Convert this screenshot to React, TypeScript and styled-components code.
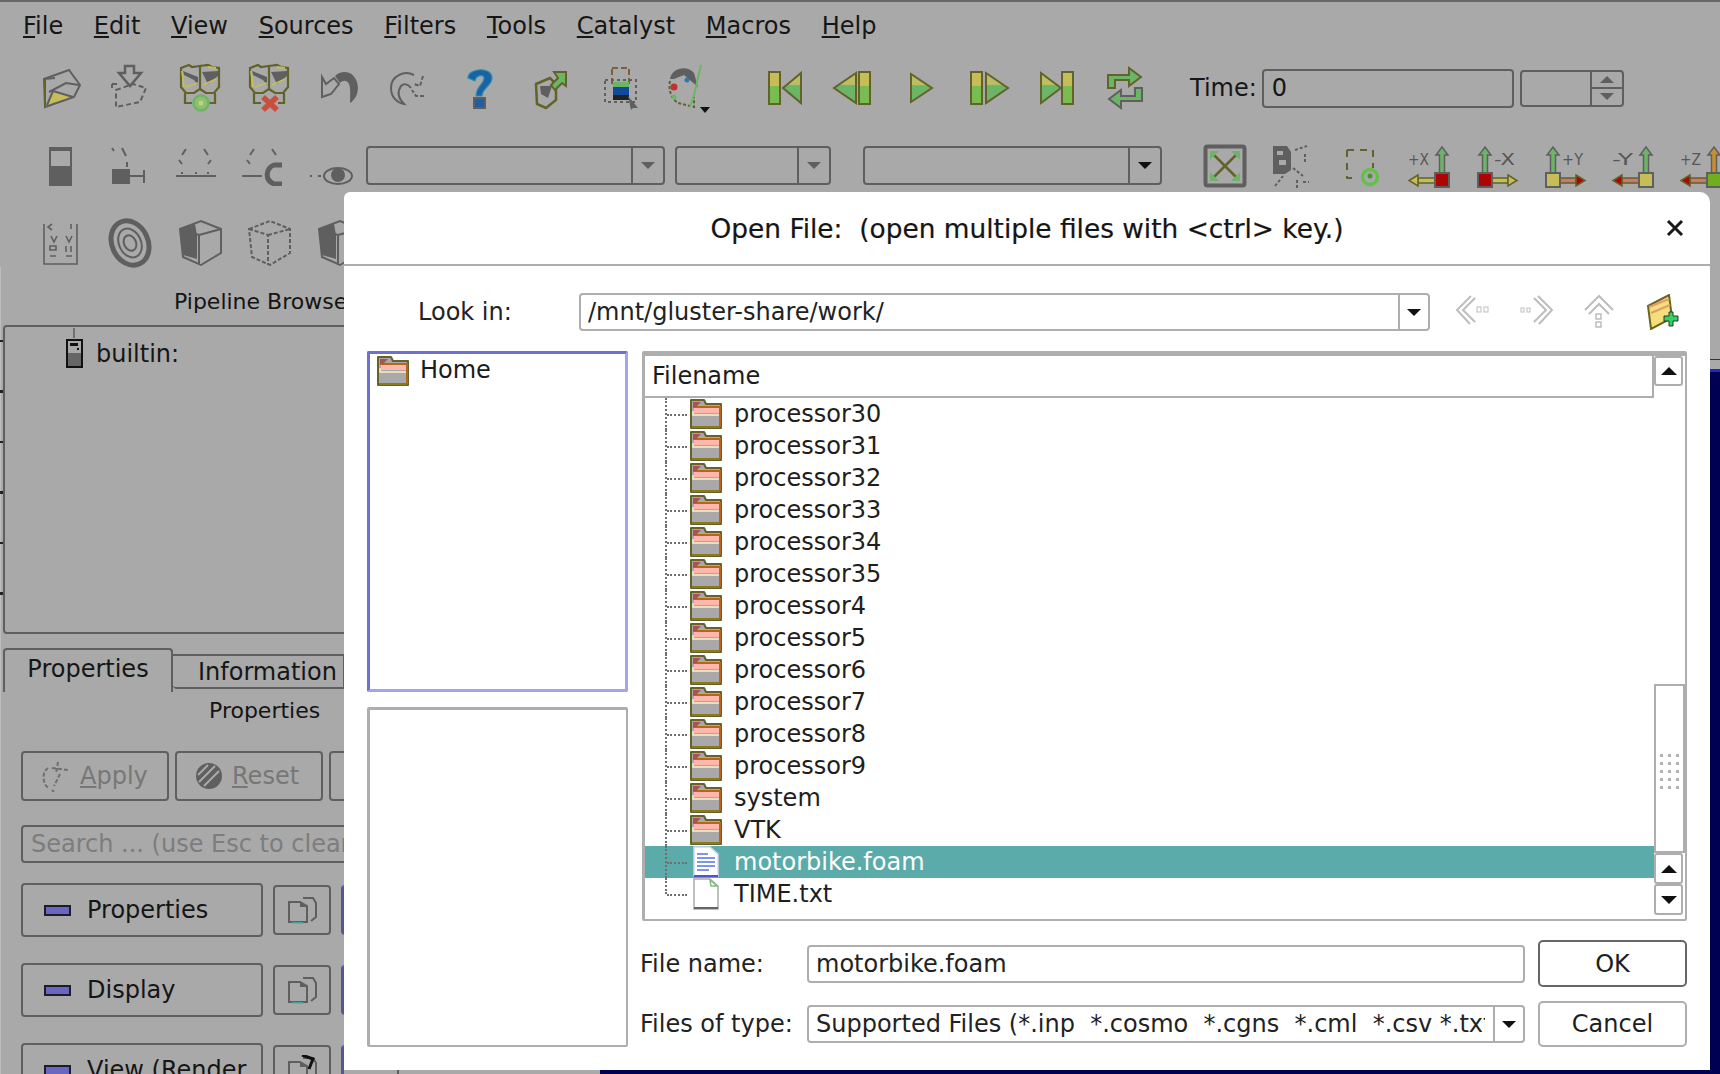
import React from "react";
import styled, { createGlobalStyle } from "styled-components";

const DARK = "#5f5f5f";
const OLIVE = "#62622a";
const YELLOW = "#c6bd58";
const GREEN = "#6cb567";
const RED = "#ad0404";
const LINE = "#aeaeae";

const GlobalStyle = createGlobalStyle`
  html, body { margin: 0; padding: 0; background: #a9a9a9; }
  * { box-sizing: border-box; }
`;

const Root = styled.div`
  position: relative;
  width: 1720px;
  height: 1074px;
  overflow: hidden;
  background: #a9a9a9;
  color: #111;
  font-family: "DejaVu Sans", sans-serif;
  font-size: 24px;
  display: flex;
  flex-direction: column;
  border-top: 2px solid #686868;
`;

const MenuBar = styled.div`
  height: 48px;
  flex: none;
  display: flex;
  align-items: center;
  gap: 30.7px;
  padding-left: 23px;
`;

const MenuItem = styled.span`
  color: #161616;
  white-space: pre;
`;

const ToolRow = styled.div<{ $h: number; $top: number }>`
  flex: none;
  height: ${(p) => p.$h}px;
  margin-top: ${(p) => p.$top}px;
  padding-left: 26px;
  display: flex;
  align-items: center;
`;

const Slot = styled.div<{ $w: number }>`
  width: ${(p) => p.$w}px;
  flex: none;
  display: flex;
  justify-content: center;
  align-items: center;
`;

const Group = styled.div<{ $left: number }>`
  display: flex;
  align-items: center;
  margin-left: ${(p) => p.$left}px;
`;

const TimeLabel = styled.span`
  margin-left: 31px;
  margin-right: 5px;
  color: #161616;
`;

const GreyField = styled.div<{ $w: number; $h?: number }>`
  width: ${(p) => p.$w}px;
  height: ${(p) => p.$h ?? 39}px;
  flex: none;
  border: 2px solid ${DARK};
  border-radius: 4px;
  display: flex;
  align-items: center;
  padding-left: 8px;
  color: #161616;
`;

const Spin = styled.div`
  width: 104px;
  height: 37px;
  margin-left: 6px;
  flex: none;
  border: 2px solid ${DARK};
  border-radius: 4px;
  display: flex;
  justify-content: flex-end;
`;

const SpinButtons = styled.div`
  width: 32px;
  border-left: 2px solid ${DARK};
  display: flex;
  flex-direction: column;
`;

const SpinCell = styled.div<{ $sep?: boolean }>`
  flex: 1;
  display: flex;
  align-items: center;
  justify-content: center;
  border-top: ${(p) => (p.$sep ? `2px solid ${DARK}` : "none")};
`;

const Caret = styled.span<{ $up?: boolean; $c?: string; $s?: number }>`
  width: 0;
  height: 0;
  display: block;
  border-left: ${(p) => p.$s ?? 7}px solid transparent;
  border-right: ${(p) => p.$s ?? 7}px solid transparent;
  ${(p) => (p.$up ? "border-bottom" : "border-top")}: ${(p) => p.$s ?? 7}px solid ${(p) => p.$c ?? "#111"};
`;

const DropCombo = styled.div<{ $w: number; $left: number }>`
  width: ${(p) => p.$w}px;
  height: 39px;
  margin-left: ${(p) => p.$left}px;
  flex: none;
  border: 2px solid ${DARK};
  border-radius: 4px;
  display: flex;
  justify-content: flex-end;
`;

const DropCell = styled.div`
  width: 32px;
  border-left: 2px solid ${DARK};
  display: flex;
  align-items: center;
  justify-content: center;
`;

/* work area below the toolbars */
const Work = styled.div`
  flex: 1;
  min-height: 0;
  display: flex;
`;

const Dock = styled.div`
  width: 600px;
  flex: none;
  overflow: hidden;
  display: flex;
  flex-direction: column;
  padding-left: 2px;
  border-left: 1px solid #bdbdbd;
`;

const DockTitle = styled.div<{ $h: number; $pad: number }>`
  height: ${(p) => p.$h}px;
  flex: none;
  display: flex;
  align-items: center;
  padding-left: ${(p) => p.$pad}px;
  font-size: 22px;
  color: #141414;
  white-space: nowrap;
`;

const PipelineTitle = styled(DockTitle)`
  padding-top: 11px;
`;

const PipelinePanel = styled.div`
  width: 520px;
  height: 309px;
  flex: none;
  border: 2px solid ${DARK};
  border-radius: 4px;
  padding: 1px 0 0 60px;
  display: flex;
  gap: 11px;
  align-items: flex-start;
`;

const Builtin = styled.span`
  margin-top: 12px;
  color: #161616;
`;

const TabRow = styled.div`
  height: 42px;
  margin-top: 14px;
  flex: none;
  display: flex;
  align-items: flex-end;
`;

const ActiveTab = styled.div`
  width: 170px;
  height: 44px;
  margin-bottom: -2px;
  border: 2px solid ${DARK};
  border-bottom: none;
  border-radius: 4px 4px 0 0;
  display: flex;
  justify-content: center;
  padding-top: 5px;
  color: #161616;
`;

const IdleTab = styled.div`
  width: 172px;
  height: 35px;
  margin-bottom: 1px;
  border: 2px solid ${DARK};
  border-left: none;
  border-radius: 0 0 0 4px;
  display: flex;
  align-items: center;
  padding-left: 25px;
  color: #161616;
`;

const ActionRow = styled.div<{ $top: number; $h: number }>`
  margin-top: ${(p) => p.$top}px;
  height: ${(p) => p.$h}px;
  flex: none;
  display: flex;
  gap: 6px;
  padding-left: 18px;
  align-items: center;
`;

const GreyButton = styled.div<{ $w: number; $h: number; $dim?: boolean }>`
  width: ${(p) => p.$w}px;
  height: ${(p) => p.$h}px;
  flex: none;
  border: 2px solid ${DARK};
  border-radius: 4px;
  display: flex;
  align-items: center;
  gap: 8px;
  padding-left: 17px;
  color: ${(p) => (p.$dim ? "#777" : "#151515")};
  white-space: pre;
`;

const SearchBox = styled.div`
  width: 520px;
  height: 38px;
  margin: 24px 0 0 18px;
  flex: none;
  border: 2px solid ${DARK};
  border-radius: 4px;
  display: flex;
  align-items: center;
  padding-left: 8px;
  color: #7d7d7d;
  white-space: pre;
  overflow: hidden;
`;

const SectionRow = styled.div<{ $top: number }>`
  margin-top: ${(p) => p.$top}px;
  height: 54px;
  flex: none;
  display: flex;
  padding-left: 18px;
  align-items: center;
`;

const SectionButton = styled.div`
  width: 242px;
  height: 54px;
  flex: none;
  border: 2px solid ${DARK};
  border-radius: 4px;
  display: flex;
  align-items: center;
  padding-left: 21px;
  gap: 16px;
  color: #151515;
  white-space: pre;
`;

const Dash = styled.span`
  width: 27px;
  height: 11px;
  flex: none;
  background: #6868c2;
  border: 2px solid #1d1d2a;
`;

const CopyButton = styled.div`
  width: 58px;
  height: 50px;
  margin-left: 10px;
  flex: none;
  border: 2px solid ${DARK};
  border-radius: 4px;
  display: flex;
  align-items: center;
  justify-content: center;
`;

const NextButton = styled.div`
  width: 58px;
  height: 50px;
  margin-left: 10px;
  flex: none;
  border: 2px solid ${DARK};
  border-left: 3px solid #55559a;
  border-radius: 4px;
`;

const Chip = styled.div<{ $w: number; $left: number }>`
  width: ${(p) => p.$w}px;
  height: 20px;
  margin-left: ${(p) => p.$left}px;
  align-self: flex-end;
  margin-bottom: -13px;
  flex: none;
  border: 2px solid ${DARK};
  border-radius: 3px;
`;

const ViewColumn = styled.div`
  flex: 1;
  min-width: 0;
  display: flex;
  flex-direction: column;
`;

const ViewTop = styled.div`
  height: 93px;
  flex: none;
  border-bottom: 1px solid #333;
`;

const ViewGap = styled.div`
  height: 12px;
  flex: none;
  border-bottom: 3px solid #2626c4;
`;

const ViewCanvas = styled.div`
  flex: 1;
  background: #000052;
`;

const EdgeTicks = styled.div`
  position: absolute;
  left: 0;
  top: 338px;
  width: 3px;
  height: 262px;
  background: repeating-linear-gradient(#222 0 2px, transparent 2px 50.5px);
`;

/* the modal open-file window */
const Dialog = styled.div`
  position: absolute;
  left: 344px;
  top: 190px;
  width: 1366px;
  height: 878px;
  background: #fff;
  border-radius: 6px 10px 0 0;
  display: flex;
  flex-direction: column;
  color: #1b1b1b;
`;

const DialogHead = styled.div`
  height: 74px;
  flex: none;
  border-bottom: 2px solid ${LINE};
  display: grid;
  grid-template-columns: 1fr auto 1fr;
  align-items: center;
`;

const Title = styled.div`
  grid-column: 2;
  white-space: pre;
  font-size: 26.4px;
  color: #151515;
  -webkit-text-stroke: 0.2px #151515;
`;

const CloseSlot = styled.div`
  justify-self: end;
  margin-right: 26px;
  display: flex;
`;

const LookRow = styled.div`
  height: 38px;
  margin-top: 27px;
  flex: none;
  display: flex;
  align-items: center;
`;

const LookLabel = styled.span`
  width: 235px;
  padding-left: 74px;
  flex: none;
  color: #222;
`;

const Field = styled.div<{ $w?: number }>`
  ${(p) => (p.$w ? `width: ${p.$w}px;` : "")}
  height: 38px;
  flex: none;
  border: 2px solid ${LINE};
  border-radius: 4px;
  display: flex;
  align-items: center;
  padding-left: 7px;
  color: #222;
  white-space: pre;
  overflow: hidden;
`;

const FieldText = styled.span`
  flex: 1;
  min-width: 0;
  overflow: hidden;
`;

const FieldDrop = styled.div`
  width: 30px;
  height: 100%;
  flex: none;
  margin-left: 8px;
  border-left: 2px solid ${LINE};
  display: flex;
  align-items: center;
  justify-content: center;
`;

const NavGroup = styled.div`
  display: flex;
  margin-left: 11px;
`;

const NavSlot = styled.div`
  width: 63px;
  display: flex;
  justify-content: center;
`;

const MainArea = styled.div`
  height: 696px;
  margin-top: 20px;
  padding: 0 23px;
  flex: none;
  display: flex;
  gap: 14px;
`;

const SideColumn = styled.div`
  width: 261px;
  flex: none;
  display: flex;
  flex-direction: column;
  gap: 15px;
`;

const Places = styled.div`
  height: 341px;
  flex: none;
  border: 3px solid #a3a6e6;
  border-top-color: #6d70cc;
  border-left-color: #6d70cc;
  border-radius: 2px;
  padding: 2px 0 0 7px;
  display: flex;
  gap: 12px;
`;

const PlaceName = styled.span`
  margin-left: -1px;
`;

const PlacesEmpty = styled.div`
  flex: 1;
  border: 2px solid ${LINE};
  border-left-width: 3px;
  border-top-width: 3px;
  border-radius: 2px;
`;

const RightColumn = styled.div`
  flex: 1;
  min-width: 0;
  display: flex;
  flex-direction: column;
`;

const Tree = styled.div`
  height: 570px;
  flex: none;
  border: 2px solid ${LINE};
  border-top-width: 5px;
  border-left-width: 3px;
  border-radius: 2px;
  display: flex;
  overflow: hidden;
`;

const TreeMain = styled.div`
  flex: 1;
  min-width: 0;
  display: flex;
  flex-direction: column;
`;

const TreeHeader = styled.div`
  height: 42px;
  flex: none;
  border-bottom: 2px solid ${LINE};
  border-right: 2px solid ${LINE};
  display: flex;
  align-items: center;
  padding-left: 7px;
  color: #1b1b1b;
`;

const Row = styled.div<{ $selected?: boolean }>`
  height: 32px;
  flex: none;
  padding-left: 20px;
  display: flex;
  align-items: center;
  background: ${(p) => (p.$selected ? "#5aabaa" : "transparent")};
  color: ${(p) => (p.$selected ? "#fff" : "#1e1e1e")};
`;

const Guide = styled.span<{ $last?: boolean }>`
  position: relative;
  width: 25px;
  height: ${(p) => (p.$last ? "50%" : "100%")};
  align-self: flex-start;
  flex: none;
  border-left: 2px dotted #6f6f6f;

  &::after {
    content: "";
    position: absolute;
    left: 0;
    top: ${(p) => (p.$last ? "100%" : "50%")};
    width: 20px;
    border-top: 2px dotted #6f6f6f;
  }
`;

const RowIcon = styled.span`
  width: 32px;
  height: 32px;
  flex: none;
  display: flex;
  align-items: center;
  justify-content: center;
`;

const RowText = styled.span`
  margin-left: 12px;
  margin-top: -1px;
`;

const ScrollCol = styled.div`
  width: 31px;
  flex: none;
  display: flex;
  flex-direction: column;
`;

const ScrollButton = styled.div<{ $h: number }>`
  height: ${(p) => p.$h}px;
  width: 29px;
  flex: none;
  border: 2px solid ${LINE};
  border-radius: 3px;
  display: flex;
  align-items: center;
  justify-content: center;
`;

const ScrollTrack = styled.div`
  flex: none;
  height: 298px;
`;

const ScrollHandle = styled.div`
  height: 169px;
  flex: none;
  border: 2px solid ${LINE};
  display: flex;
  align-items: center;
  justify-content: center;
  padding-top: 4px;
`;

const FileForm = styled.div`
  margin-top: 19px;
  display: grid;
  grid-template-columns: 165px 718px 149px;
  row-gap: 14px;
  grid-template-rows: 47px 46px;
  align-items: center;
`;

const FormLabel = styled.span`
  margin-left: -2px;
  color: #222;
`;

const DialogButton = styled.div<{ $primary?: boolean }>`
  width: 149px;
  margin-left: 13px;
  height: 100%;
  border: 2px solid ${(p) => (p.$primary ? "#666" : LINE)};
  border-radius: 5px;
  display: flex;
  align-items: center;
  justify-content: center;
  color: #1e1e1e;
`;

/* drawn icons --------------------------------------------------------- */

const OpenIcon = () => (
  <svg width="44" height="48" viewBox="0 0 44 48">
    <path d="M7 42 L14 28 L34 33 Z" fill={YELLOW} />
    <path d="M5 15 L30 6 L41 21 L35 33 L6 43 Z" fill="none" stroke={DARK} strokeWidth="2" />
    <path d="M5 15 L16 14 M10 28 L27 19 L40 21 M8 41 L14 27 L34 33" fill="none" stroke={DARK} strokeWidth="2" />
    <path d="M6 16 L6 42" stroke={OLIVE} strokeWidth="2" />
  </svg>
);

const SaveIcon = () => (
  <svg width="44" height="48" viewBox="0 0 44 48">
    <path d="M4 20 H12 M4 20 V24 M8 26 L25 20 L38 24 L32 38 L8 43 Z" fill="none" stroke={DARK} strokeWidth="2" strokeDasharray="5 3" />
    <path d="M17 2 H26 V9 H33 L22 22 L11 9 H17 Z" fill="none" stroke={DARK} strokeWidth="2.5" />
  </svg>
);

const ServerIcon = ({ bad }: { bad?: boolean }) => (
  <svg width="44" height="50" viewBox="0 0 44 50">
    <path d="M3 5 L11 2 L14 4 L22 3 V26 L16 30 H8 L3 24 Z M22 3 L30 2 L34 4 L41 5 V24 L36 30 H28 L22 26" fill="none" stroke={OLIVE} strokeWidth="2.2" />
    <path d="M5 8 L20 14 V22 L16 17 L6 12 Z M24 9 L40 8 V13 L30 21 Z" fill={DARK} />
    <path d="M4 8 L6 24 M8 24 L20 20 M30 4 L38 5 M25 22 L38 16" stroke={YELLOW} strokeWidth="1.8" />
    <path d="M7 30 V40 H14 M37 30 V40 H31" fill="none" stroke={OLIVE} strokeWidth="2.2" />
    {bad ? (
      <path d="M16 34 L30 47 M30 34 L16 47" stroke="#c9503e" strokeWidth="5.5" />
    ) : (
      <>
        <circle cx="23" cy="40" r="7.5" fill="#8cc06e" stroke={GREEN} strokeWidth="2.5" />
        <circle cx="23" cy="40" r="2.5" fill="#c4cf7e" />
      </>
    )}
  </svg>
);

const UndoIcon = () => (
  <svg width="44" height="48" viewBox="0 0 44 48">
    <path d="M5 13 L9 20 L17 14 L22 20 L14 30 L5 33 Z" fill="none" stroke={DARK} strokeWidth="2" />
    <path d="M18 12 C24 6 36 6 40 18 C43 28 38 36 33 39 C33 33 34 26 32 20 C30 16 26 16 23 19 Z" fill={DARK} />
  </svg>
);

const RedoIcon = () => (
  <svg width="44" height="48" viewBox="0 0 44 48">
    <path d="M28 11 C18 6 5 12 5 24 C5 34 12 39 18 40 C12 34 11 28 15 22 C18 19 22 20 25 24" fill="none" stroke={DARK} strokeWidth="2" />
    <path d="M37 12 L34 22 L28 20 M38 32 L30 32 L26 26" fill="none" stroke={DARK} strokeWidth="2" strokeDasharray="4 2" />
  </svg>
);

const HelpIcon = () => (
  <svg width="44" height="48" viewBox="-2 0 44 48">
    <path d="M10 14 C10 4 34 2 34 14 C34 22 24 24 24 32 H18 C18 22 26 20 26 14 C26 10 18 11 17 17 Z" fill="#1a62a8" stroke="#2f8fa8" strokeWidth="1.2" />
    <rect x="16" y="34" width="11" height="10" fill="#1f5da5" stroke={DARK} strokeWidth="2" />
  </svg>
);

const ExportIcon = () => (
  <svg width="44" height="48" viewBox="-3 0 44 48">
    <path d="M8 20 L22 14 L28 20 V36 L18 44 L9 40 Z" fill="none" stroke={OLIVE} strokeWidth="2.5" />
    <path d="M12 22 L24 22 L20 34 L13 30 Z" fill={DARK} />
    <path d="M26 8 L38 8 L38 22 L34 19 L27 26 L23 21 L30 14 Z" fill={GREEN} stroke={OLIVE} strokeWidth="2" />
  </svg>
);

const SelectIcon = () => (
  <svg width="44" height="48" viewBox="-4 0 44 48">
    <rect x="13" y="4" width="17" height="18" fill="none" stroke="#7b5f3e" strokeWidth="2" strokeDasharray="6 3" />
    <rect x="6" y="16" width="31" height="22" fill="none" stroke={DARK} strokeWidth="2" strokeDasharray="3 3" />
    <rect x="14" y="18" width="16" height="5" fill={GREEN} />
    <rect x="14" y="23" width="16" height="8" fill="#104a9a" />
    <rect x="14" y="31" width="16" height="5" fill="#222" />
    <path d="M29 32 L39 44 L34 44 L32 46 Z" fill={DARK} />
  </svg>
);

const HeadIcon = () => (
  <svg width="48" height="50" viewBox="-2 0 48 50">
    <path d="M6 16 C8 4 24 2 30 10 L34 24 L20 12 L10 16 Z" fill={DARK} />
    <path d="M6 18 C4 28 8 36 14 40 L30 44 V34" fill="none" stroke={OLIVE} strokeWidth="2" strokeDasharray="3 2" />
    <path d="M37 2 L30 32 L26 44" fill="none" stroke={GREEN} strokeWidth="2" />
    <circle cx="23" cy="17" r="2.5" fill="#2a78b8" />
    <circle cx="10" cy="24" r="3.5" fill="#c23030" />
    <circle cx="10" cy="34" r="2.5" fill={GREEN} />
    <path d="M36 44 H46 L41 50 Z" fill="#111" />
  </svg>
);

type StepKind = "first" | "prev" | "play" | "next" | "last";

const StepIcon = ({ kind }: { kind: StepKind }) => {
  const tri = { fill: `url(#step-${kind})`, stroke: OLIVE, strokeWidth: 2 };
  const Bar = ({ x }: { x: number }) => (
    <>
      <rect x={x} y="6" width="11" height="32" fill="#78bc52" stroke={OLIVE} strokeWidth="2" />
      <rect x={x + 1} y="7" width="9" height="13" fill={YELLOW} />
    </>
  );
  return (
    <svg width="44" height="44" viewBox="0 0 44 44">
      <defs>
        <linearGradient id={`step-${kind}`} x1="0" y1="0" x2="0" y2="1">
          <stop offset="0.38" stopColor="#bdbd62" />
          <stop offset="0.42" stopColor={GREEN} />
        </linearGradient>
      </defs>
      {kind === "first" && (
        <>
          <Bar x={6} />
          <path d="M38 7 L20 22 L38 37 Z" {...tri} />
        </>
      )}
      {kind === "prev" && (
        <>
          <path d="M25 7 L3 22 L25 37 Z" {...tri} />
          <Bar x={28} />
        </>
      )}
      {kind === "play" && <path d="M12 8 L33 22 L12 36 Z" {...tri} />}
      {kind === "next" && (
        <>
          <Bar x={4} />
          <path d="M19 7 L41 22 L19 37 Z" {...tri} />
        </>
      )}
      {kind === "last" && (
        <>
          <path d="M6 7 L26 22 L6 37 Z" {...tri} />
          <Bar x={27} />
        </>
      )}
    </svg>
  );
};

const LoopIcon = () => (
  <svg width="44" height="48" viewBox="0 0 44 48">
    <path d="M5 24 V11 H26 V4 L38 13 L26 22 V16 H12 V24 Z" fill={GREEN} stroke={OLIVE} strokeWidth="2" />
    <path d="M39 24 V37 H18 V44 L6 35 L18 26 V32 H32 V24 Z" fill={GREEN} stroke={DARK} strokeWidth="2" />
  </svg>
);

const BlockIcon = () => (
  <svg width="26" height="40" viewBox="0 0 26 40">
    <rect x="2" y="1" width="23" height="39" fill={DARK} />
    <rect x="4" y="5" width="19" height="15" fill="#a9a9a9" />
  </svg>
);

const CupIcon = () => (
  <svg width="44" height="40" viewBox="0 0 44 40">
    <path d="M6 2 L8 5 M16 2 L20 10 M21 16 V21" stroke={DARK} strokeWidth="2" />
    <path d="M6 23 H24 V38 H6 Z" fill={DARK} />
    <path d="M24 30 H38 M38 24 V37" stroke={DARK} strokeWidth="2" />
  </svg>
);

const FlatIcon = () => (
  <svg width="44" height="40" viewBox="0 0 44 40">
    <path d="M12 3 L8 9 M5 14 L8 18 M30 3 L34 9 M37 14 L34 18 M2 30 H42 M8 28 V26 M22 28 V26 M34 28 V26" fill="none" stroke={DARK} strokeWidth="2" />
  </svg>
);

const CurveIcon = () => (
  <svg width="44" height="40" viewBox="0 0 44 40">
    <path d="M12 3 L8 9 M5 14 L8 18 M30 3 L34 9 M0 30 H20" fill="none" stroke={DARK} strokeWidth="2" />
    <path d="M40 19 H32 C24 22 22 34 32 38 H40" fill="none" stroke={DARK} strokeWidth="5" />
  </svg>
);

const EyeIcon = () => (
  <svg width="48" height="40" viewBox="0 0 48 40">
    <path d="M2 30 H4 M10 30 H13" stroke={DARK} strokeWidth="2" />
    <ellipse cx="30" cy="30" rx="14" ry="8" fill="none" stroke={DARK} strokeWidth="2" />
    <circle cx="30" cy="29" r="7" fill={DARK} />
  </svg>
);

const GridIcon = () => (
  <svg width="38" height="46" viewBox="0 0 38 46">
    <path d="M2 4 V44 H35 V4" fill="none" stroke={DARK} strokeWidth="1.6" />
    <path d="M10 4 L6 7 L10 10 M29 4 V9 M9 16 L12 22 L15 16 M24 16 L27 22 L30 16 M8 26 H14 V30 H8 Z M24 26 V32 M29 26 V32 M8 36 H14 M24 36 H30" fill="none" stroke={DARK} strokeWidth="1.6" />
  </svg>
);

const RingIcon = () => (
  <svg width="54" height="50" viewBox="0 0 54 50">
    <g transform="rotate(-25 27 25)" fill="none" stroke={DARK}>
      <ellipse cx="27" cy="25" rx="18" ry="23" strokeWidth="5" />
      <ellipse cx="27" cy="25" rx="11" ry="15" strokeWidth="2" />
      <ellipse cx="27" cy="25" rx="6" ry="8" strokeWidth="2" />
    </g>
  </svg>
);

const CubeIcon = ({ solid, dashed }: { solid?: boolean; dashed?: boolean }) => (
  <svg width="46" height="48" viewBox="0 0 46 48">
    <path
      d="M3 10 L24 2 L44 10 V34 L24 46 L6 38 Z M3 10 L22 16 V46 M22 16 L44 10"
      fill="none"
      stroke={DARK}
      strokeWidth="2"
      strokeDasharray={dashed ? "4 2" : undefined}
    />
    {solid && <path d="M3 10 L18 5 L20 16 V40 L6 36 Z" fill={DARK} />}
  </svg>
);

const FitIcon = () => (
  <svg width="44" height="44" viewBox="0 0 44 44">
    <rect x="2.5" y="2.5" width="39" height="39" rx="2" fill="none" stroke={DARK} strokeWidth="4" />
    <path d="M9 9 L35 35 M35 9 L9 35" stroke={OLIVE} strokeWidth="2.5" />
    <path d="M7 7 H16 L7 16 Z M37 7 H28 L37 16 Z M7 37 H16 L7 28 Z M37 37 H28 L37 28 Z" fill={GREEN} />
  </svg>
);

const DashedBoxIcon = () => (
  <svg width="44" height="44" viewBox="0 0 44 44">
    <path d="M2 2 H16 L20 8 V26 L14 30 H2 Z" fill={DARK} />
    <path d="M6 7 h6 v4 h-6z M8 16 h7 v5 h-7z" fill="#a9a9a9" />
    <path d="M24 6 L36 2 M34 10 V20 M22 24 L32 32 M4 42 L12 32 M26 36 V44 M32 38 H38" fill="none" stroke={DARK} strokeWidth="2" strokeDasharray="3 2" />
  </svg>
);

const ZoomBoxIcon = () => (
  <svg width="44" height="44" viewBox="0 0 44 44">
    <path d="M8 6 H34 V24 M8 6 V34 H16" fill="none" stroke={OLIVE} strokeWidth="2" strokeDasharray="7 6" />
    <circle cx="31" cy="33" r="7.5" fill="none" stroke="#65c04a" strokeWidth="3.5" />
    <circle cx="31" cy="32" r="2.5" fill="#4f8f3c" />
  </svg>
);

type AxisProps = {
  label: string;
  square: string;
  arrow: string;
  tip: string;
  rise: string;
  side: "left" | "right";
};

const AxisIcon = ({ label, square, arrow, tip, rise, side }: AxisProps) => {
  const left = side === "left";
  const sqX = left ? 3 : 28;
  const upX = sqX + 7;
  return (
    <svg width="44" height="44" viewBox="0 0 44 44">
      <path
        d={`M${upX - 2.5} 29 V11 H${upX - 6} L${upX} 3 L${upX + 6} 11 H${upX + 2.5} V29 Z`}
        fill={rise}
        stroke={DARK}
        strokeWidth="1.5"
      />
      {left ? (
        <>
          <path d="M17 34 H33 V39 H17 Z" fill={arrow} stroke={OLIVE} strokeWidth="1.5" />
          <path d="M33 31 L42 36.5 L33 42 Z" fill={tip} stroke={OLIVE} strokeWidth="1.5" />
        </>
      ) : (
        <>
          <path d="M28 34 H11 V39 H28 Z" fill={arrow} stroke={OLIVE} strokeWidth="1.5" />
          <path d="M11 31 L2 36.5 L11 42 Z" fill={tip} stroke={OLIVE} strokeWidth="1.5" />
        </>
      )}
      <rect x={sqX} y="29" width="14" height="14" fill={square} stroke={DARK} strokeWidth="2" />
      <text
        x={left ? 19 : 1}
        y="21"
        fontFamily="'DejaVu Sans', sans-serif"
        fontSize="16"
        textLength="21"
        lengthAdjust="spacingAndGlyphs"
        fill="#575757"
      >
        {label}
      </text>
    </svg>
  );
};

const ServerSmall = () => (
  <svg width="20" height="40" viewBox="0 0 20 40">
    <path d="M9 0 V10" stroke={DARK} strokeWidth="1.5" />
    <rect x="2" y="12" width="15" height="27" fill="#a9a9a9" stroke="#111" strokeWidth="2" />
    <rect x="3" y="25" width="13" height="13" fill="#666" />
    <rect x="5" y="15" width="8" height="3" fill="#111" />
    <rect x="12" y="20" width="2" height="2" fill="#111" />
  </svg>
);

const ApplyGlyph = () => (
  <svg width="32" height="32" viewBox="0 0 32 32">
    <path d="M8 8 C2 12 2 22 8 28 M18 2 L16 14 M12 8 L28 10 M20 14 L14 26 M12 30 L14 32" fill="none" stroke="#6f6f6f" strokeWidth="2" strokeDasharray="4 2" />
  </svg>
);

const ResetGlyph = () => (
  <svg width="30" height="30" viewBox="0 0 30 30">
    <circle cx="15" cy="15" r="13" fill={DARK} />
    <path d="M4 14 L14 4 M5 21 L21 5 M10 25 L25 10" stroke="#a9a9a9" strokeWidth="2" />
  </svg>
);

const CopyGlyph = ({ tilt }: { tilt?: boolean }) => (
  <svg width="30" height="30" viewBox="0 0 30 30">
    <path d="M16 3 L26 3 L29 8 V22 L24 26" fill="none" stroke={DARK} strokeWidth="2" />
    <path d="M2 7 H13 L20 11 V27 H2 Z" fill="#a9a9a9" stroke={DARK} strokeWidth="2" />
    <path d="M13 7 V12 H20" fill={DARK} />
    <path d="M5 28 H16" stroke="#49b3b3" strokeWidth="1.5" />
    {tilt && <path d="M15 0 L26 4 L22 14" fill="none" stroke="#111" strokeWidth="3" />}
  </svg>
);

const Folder = () => (
  <svg width="32" height="30" viewBox="0 0 32 30">
    <path d="M1 29 V1 H14 L16 5 H31 V29 Z" fill="#a9a9a9" stroke={OLIVE} strokeWidth="2" strokeLinejoin="round" />
    <path d="M3 8 H30 V28" fill="none" stroke="#b5651c" strokeWidth="2" />
    <rect x="4" y="9" width="25" height="5" fill="#ffb6ae" />
    <path d="M3 12 V16 H29" fill="none" stroke="#ffeec0" strokeWidth="1.5" />
    <path d="M3 3 H11 L6 8 H3 Z" fill="#a85252" />
    <path d="M2 28 H30" stroke="#8a7a18" strokeWidth="2" />
  </svg>
);

const FoamDoc = () => (
  <svg width="26" height="32" viewBox="0 0 26 32">
    <path d="M1 1 H17 L25 8 V30 H1 Z" fill="#fff" stroke="#cfd4ff" strokeWidth="1.5" />
    <path d="M4 8 H15 M4 12 H22 M4 16 H22 M4 20 H22 M4 24 H16" stroke="#7d95ee" strokeWidth="2" />
    <path d="M1 30 H25" stroke="#4f55c8" strokeWidth="2" />
  </svg>
);

const TextDoc = () => (
  <svg width="26" height="32" viewBox="0 0 26 32">
    <path d="M1 1 H17 L25 8 V31 H1 Z" fill="#fff" stroke="#aaa" strokeWidth="1.5" />
    <path d="M17 2 L24 8 H18 Z" fill="#fff" stroke="#7fc07f" strokeWidth="1.5" />
    <path d="M1 30 H25" stroke="#666" strokeWidth="2" />
  </svg>
);

const NavBack = ({ c }: { c: string }) => (
  <svg width="36" height="32" viewBox="0 0 36 32">
    <path d="M16 2 L2 16 L15 30 M20 4 L8 16 L20 28" fill="none" stroke={c} strokeWidth="2" />
    <rect x="22" y="13" width="4" height="5" fill="none" stroke={c} />
    <rect x="29" y="13" width="4" height="5" fill="none" stroke={c} />
  </svg>
);

const NavForward = ({ c }: { c: string }) => (
  <svg width="36" height="32" viewBox="0 0 36 32">
    <path d="M20 2 L34 16 L21 30 M16 4 L28 16 L16 28" fill="none" stroke={c} strokeWidth="2" />
    <rect x="3" y="14" width="3" height="4" fill="none" stroke={c} />
    <rect x="9" y="14" width="3" height="4" fill="none" stroke={c} />
  </svg>
);

const NavUp = ({ c }: { c: string }) => (
  <svg width="32" height="34" viewBox="0 0 32 34">
    <path d="M2 16 L16 2 L30 16 M6 20 L16 10 L26 20" fill="none" stroke={c} strokeWidth="2" />
    <rect x="13" y="20" width="5" height="5" fill="none" stroke={c} strokeWidth="1.5" />
    <rect x="13" y="28" width="5" height="5" fill="none" stroke={c} strokeWidth="1.5" />
  </svg>
);

const NewFolder = () => (
  <svg width="34" height="36" viewBox="0 0 34 36">
    <path d="M3 12 L24 1 L27 24 L6 35 Z" fill="#f4df7a" stroke="#6b6420" strokeWidth="2" />
    <path d="M4 13 L24 5 M6 19 L25 11" stroke="#e59a6c" strokeWidth="2" />
    <path d="M24 18 H28 V22 H33 V27 H28 V32 H24 V27 H19 V22 H24 Z" fill="#2fd35f" stroke="#333" strokeWidth="1" />
  </svg>
);

const CloseGlyph = () => (
  <svg width="18" height="18" viewBox="0 0 18 18">
    <path d="M2 2 L16 16 M16 2 L2 16" stroke="#1a1a1a" strokeWidth="3" />
  </svg>
);

const GripDots = () => (
  <svg width="22" height="36" viewBox="0 0 22 36">
    {[0, 8, 16, 24, 32].map((y) =>
      [0, 8, 16].map((x) => <rect key={`${x}-${y}`} x={x + 1} y={y + 1} width="3" height="3" fill="#b2b2b2" />)
    )}
  </svg>
);

const MENU = ["File", "Edit", "View", "Sources", "Filters", "Tools", "Catalyst", "Macros", "Help"];

const FILES = [
  "processor30",
  "processor31",
  "processor32",
  "processor33",
  "processor34",
  "processor35",
  "processor4",
  "processor5",
  "processor6",
  "processor7",
  "processor8",
  "processor9",
  "system",
  "VTK",
];

const COMMON: React.ReactNode[] = [
  <OpenIcon key="open" />,
  <SaveIcon key="save" />,
  <ServerIcon key="connect" />,
  <ServerIcon key="disconnect" bad />,
  <UndoIcon key="undo" />,
  <RedoIcon key="redo" />,
  <HelpIcon key="help" />,
  <ExportIcon key="export" />,
  <SelectIcon key="select" />,
  <HeadIcon key="head" />,
];

const STEPS: StepKind[] = ["first", "prev", "play", "next", "last"];

const REDLINE = "#c97a6a";

const AXES: AxisProps[] = [
  { label: "+X", square: RED, arrow: YELLOW, tip: YELLOW, rise: GREEN, side: "right" },
  { label: "-X", square: RED, arrow: YELLOW, tip: YELLOW, rise: GREEN, side: "left" },
  { label: "+Y", square: YELLOW, arrow: REDLINE, tip: RED, rise: GREEN, side: "left" },
  { label: "-Y", square: YELLOW, arrow: REDLINE, tip: RED, rise: GREEN, side: "right" },
  { label: "+Z", square: "#6fae1f", arrow: REDLINE, tip: RED, rise: "#c98f2a", side: "right" },
];

export default function App() {
  return (
    <Root>
      <GlobalStyle />
      <MenuBar>
        {MENU.map((m) => (
          <MenuItem key={m}>
            <u>{m[0]}</u>
            {m.slice(1)}
          </MenuItem>
        ))}
      </MenuBar>

      <ToolRow $h={48} $top={14}>
        {COMMON.map((icon, i) => (
          <Slot key={i} $w={69.5}>
            {icon}
          </Slot>
        ))}
        <Group $left={30}>
          {STEPS.map((s) => (
            <Slot key={s} $w={68}>
              <StepIcon kind={s} />
            </Slot>
          ))}
          <Slot $w={68}>
            <LoopIcon />
          </Slot>
        </Group>
        <TimeLabel>Time:</TimeLabel>
        <GreyField $w={252}>0</GreyField>
        <Spin>
          <SpinButtons>
            <SpinCell>
              <Caret $up $c="#5f5f5f" />
            </SpinCell>
            <SpinCell $sep>
              <Caret $c="#5f5f5f" />
            </SpinCell>
          </SpinButtons>
        </Spin>
      </ToolRow>

      <ToolRow $h={39} $top={34}>
        <Slot $w={68}>
          <BlockIcon />
        </Slot>
        <Slot $w={68}>
          <CupIcon />
        </Slot>
        <Slot $w={68}>
          <FlatIcon />
        </Slot>
        <Slot $w={68}>
          <CurveIcon />
        </Slot>
        <Slot $w={68}>
          <EyeIcon />
        </Slot>
        <DropCombo $w={299} $left={0}>
          <DropCell>
            <Caret $c="#5f5f5f" />
          </DropCell>
        </DropCombo>
        <DropCombo $w={156} $left={10}>
          <DropCell>
            <Caret $c="#5f5f5f" />
          </DropCell>
        </DropCombo>
        <DropCombo $w={299} $left={32}>
          <DropCell>
            <Caret />
          </DropCell>
        </DropCombo>
        <Group $left={29}>
          <Slot $w={68}>
            <FitIcon />
          </Slot>
          <Slot $w={68}>
            <DashedBoxIcon />
          </Slot>
          <Slot $w={68}>
            <ZoomBoxIcon />
          </Slot>
          {AXES.map((a) => (
            <Slot key={a.label} $w={68}>
              <AxisIcon {...a} />
            </Slot>
          ))}
        </Group>
      </ToolRow>

      <ToolRow $h={48} $top={34}>
        <Slot $w={69.5}>
          <GridIcon />
        </Slot>
        <Slot $w={69.5}>
          <RingIcon />
        </Slot>
        <Slot $w={69.5}>
          <CubeIcon solid />
        </Slot>
        <Slot $w={69.5}>
          <CubeIcon dashed />
        </Slot>
        <Slot $w={69.5}>
          <CubeIcon solid />
        </Slot>
      </ToolRow>

      <Work>
        <Dock>
          <PipelineTitle $h={58} $pad={171}>
            Pipeline Browser
          </PipelineTitle>
          <PipelinePanel>
            <ServerSmall />
            <Builtin>builtin:</Builtin>
          </PipelinePanel>
          <TabRow>
            <ActiveTab>Properties</ActiveTab>
            <IdleTab>Information</IdleTab>
          </TabRow>
          <DockTitle $h={40} $pad={206}>
            Properties
          </DockTitle>
          <ActionRow $top={21} $h={50}>
            <GreyButton $w={148} $h={50} $dim>
              <ApplyGlyph />
              <span>
                <u>A</u>pply
              </span>
            </GreyButton>
            <GreyButton $w={148} $h={50} $dim>
              <ResetGlyph />
              <span>
                <u>R</u>eset
              </span>
            </GreyButton>
            <GreyButton $w={148} $h={50} />
          </ActionRow>
          <SearchBox>Search ... (use Esc to clear text)</SearchBox>
          <SectionRow $top={20}>
            <SectionButton>
              <Dash />
              Properties
            </SectionButton>
            <CopyButton>
              <CopyGlyph />
            </CopyButton>
            <NextButton />
          </SectionRow>
          <SectionRow $top={26}>
            <SectionButton>
              <Dash />
              Display
            </SectionButton>
            <CopyButton>
              <CopyGlyph />
            </CopyButton>
            <NextButton />
          </SectionRow>
          <SectionRow $top={26}>
            <SectionButton>
              <Dash />
              View (Render
            </SectionButton>
            <CopyButton>
              <CopyGlyph tilt />
            </CopyButton>
            <NextButton />
            <Chip $w={28} $left={0} />
            <Chip $w={25} $left={5} />
            <Chip $w={17} $left={8} />
            <Chip $w={37} $left={5} />
            <Chip $w={62} $left={9} />
            <Chip $w={24} $left={5} />
          </SectionRow>
        </Dock>
        <ViewColumn>
          <ViewTop />
          <ViewGap />
          <ViewCanvas />
        </ViewColumn>
      </Work>

      <EdgeTicks />

      <Dialog>
        <DialogHead>
          <Title>{"Open File:  (open multiple files with <ctrl> key.)"}</Title>
          <CloseSlot>
            <CloseGlyph />
          </CloseSlot>
        </DialogHead>

        <LookRow>
          <LookLabel>Look in:</LookLabel>
          <Field $w={851}>
            <FieldText>/mnt/gluster-share/work/</FieldText>
            <FieldDrop>
              <Caret />
            </FieldDrop>
          </Field>
          <NavGroup>
            <NavSlot>
              <NavBack c="#bdbdbd" />
            </NavSlot>
            <NavSlot>
              <NavForward c="#bdbdbd" />
            </NavSlot>
            <NavSlot>
              <NavUp c="#bdbdbd" />
            </NavSlot>
            <NavSlot>
              <NewFolder />
            </NavSlot>
          </NavGroup>
        </LookRow>

        <MainArea>
          <SideColumn>
            <Places>
              <Folder />
              <PlaceName>Home</PlaceName>
            </Places>
            <PlacesEmpty />
          </SideColumn>

          <RightColumn>
            <Tree>
              <TreeMain>
                <TreeHeader>Filename</TreeHeader>
                {FILES.map((f) => (
                  <Row key={f}>
                    <Guide />
                    <RowIcon>
                      <Folder />
                    </RowIcon>
                    <RowText>{f}</RowText>
                  </Row>
                ))}
                <Row $selected>
                  <Guide />
                  <RowIcon>
                    <FoamDoc />
                  </RowIcon>
                  <RowText>motorbike.foam</RowText>
                </Row>
                <Row>
                  <Guide $last />
                  <RowIcon>
                    <TextDoc />
                  </RowIcon>
                  <RowText>TIME.txt</RowText>
                </Row>
              </TreeMain>
              <ScrollCol>
                <ScrollButton $h={30}>
                  <Caret $up $s={8} />
                </ScrollButton>
                <ScrollTrack />
                <ScrollHandle>
                  <GripDots />
                </ScrollHandle>
                <ScrollButton $h={31}>
                  <Caret $up $s={8} />
                </ScrollButton>
                <ScrollButton $h={31}>
                  <Caret $s={8} />
                </ScrollButton>
              </ScrollCol>
            </Tree>

            <FileForm>
              <FormLabel>File name:</FormLabel>
              <Field>motorbike.foam</Field>
              <DialogButton $primary>OK</DialogButton>
              <FormLabel>Files of type:</FormLabel>
              <Field>
                <FieldText>Supported Files (*.inp  *.cosmo  *.cgns  *.cml  *.csv *.txt)</FieldText>
                <FieldDrop>
                  <Caret />
                </FieldDrop>
              </Field>
              <DialogButton>Cancel</DialogButton>
            </FileForm>
          </RightColumn>
        </MainArea>
      </Dialog>
    </Root>
  );
}
